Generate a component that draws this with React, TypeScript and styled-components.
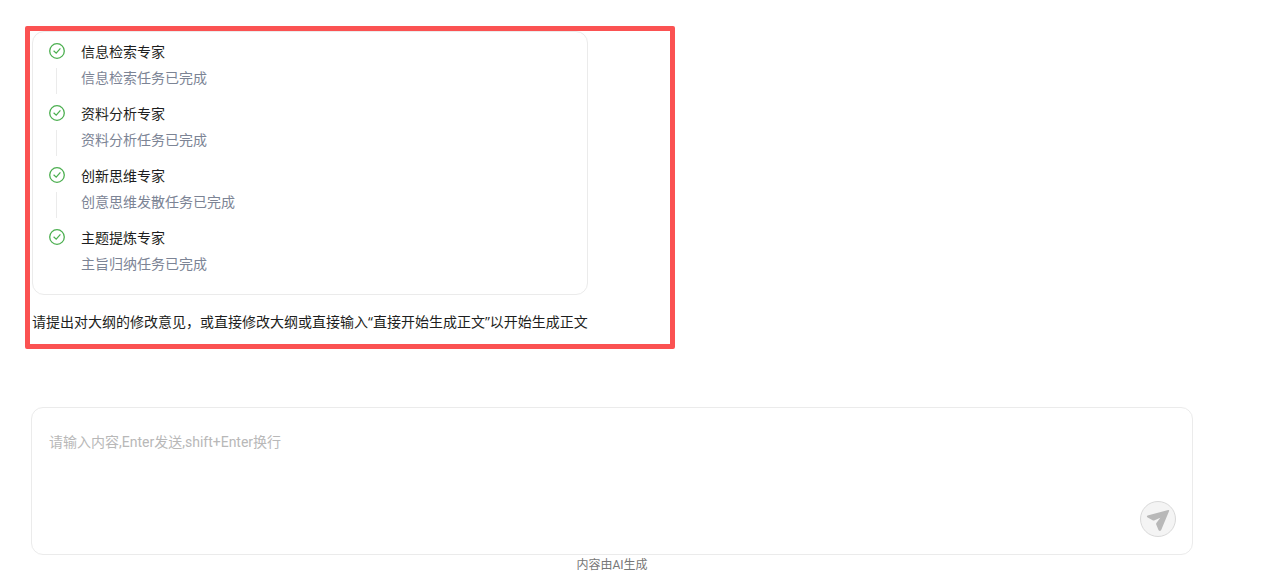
import React from "react";
import styled, { createGlobalStyle } from "styled-components";

const GlobalStyle = createGlobalStyle`
  * { box-sizing: border-box; }
  body {
    margin: 0;
    background: #fff;
    color: #1d1e20;
    font: 400 14px/22px "Open Sans", "Noto Sans CJK SC", sans-serif;
  }
`;

const Page = styled.main`
  padding: 26px 70px 0 25px;
`;

const Highlight = styled.section`
  width: 650px;
  max-width: 100%;
  border: 5px solid #fb5252;
  border-radius: 2px;
  padding: 0 2px 11px;
`;

const Message = styled.div`
  width: fit-content;
`;

const Steps = styled.ol`
  list-style: none;
  margin: 0;
  padding: 9px 16px 19px;
  border: 1px solid #ebebeb;
  border-radius: 12px;
`;

const Step = styled.li`
  display: flex;
  gap: 16px;
  & + & { margin-top: 9px; }
`;

const Rail = styled.div`
  display: flex;
  flex-direction: column;
  align-items: center;
  width: 16px;
  padding-top: 2px;
`;

const Line = styled.span`
  width: 1px;
  height: 26px;
  margin: 9px 1px 0 0;
  background: #ebebeb;
`;

const Body = styled.div`
  display: grid;
  align-content: start;
  gap: 4px;
`;

const Title = styled.h3`
  margin: 0;
  font: inherit;
`;

const Detail = styled.p`
  margin: 0;
  color: #7c8495;
`;

const Prompt = styled.p`
  margin: 16px 0 0;
`;

const Composer = styled.form`
  display: flex;
  align-items: flex-end;
  height: 148px;
  margin: 58px 0 0 6px;
  padding: 16px 16px 17px 17px;
  border: 1px solid #ebebeb;
  border-radius: 12px;
`;

const Input = styled.textarea`
  flex: 1;
  align-self: stretch;
  min-width: 0;
  padding: 7px 0;
  border: 0;
  outline: 0;
  resize: none;
  background: transparent;
  color: inherit;
  font: 400 14px/22px Roboto, "Noto Sans CJK SC", sans-serif;
  &::placeholder { color: #b8b8b8; opacity: 1; }
`;

const SendButton = styled.button`
  display: grid;
  place-items: center;
  width: 36px;
  height: 36px;
  padding: 0;
  border: 1px solid #d9d9d9;
  border-radius: 50%;
  background: #f4f4f4;
  color: #b8b8b8;
`;

const Notice = styled.footer`
  margin-left: 6px;
  text-align: center;
  color: #777;
  font: 400 12px/20px Roboto, "Noto Sans CJK SC", sans-serif;
`;

const steps = [
  { title: "信息检索专家", detail: "信息检索任务已完成" },
  { title: "资料分析专家", detail: "资料分析任务已完成" },
  { title: "创新思维专家", detail: "创意思维发散任务已完成" },
  { title: "主题提炼专家", detail: "主旨归纳任务已完成" },
];

const DoneIcon = () => (
  <svg width="16" height="16" viewBox="0 0 16 16" fill="none" stroke="#4caf50" aria-hidden="true">
    <circle cx="8" cy="8" r="7.3" strokeWidth="1.3" />
    <path d="M4.6 7.7 7.2 10.2 11.4 5.3" strokeWidth="1.2" />
  </svg>
);

const SendIcon = () => (
  <svg width="24" height="24" viewBox="0 0 24 24" fill="currentColor" aria-hidden="true">
    <path d="M22.2 3.1Q23.5 2.9 23.1 4.1L15.2 22.9Q14 24.8 12.6 23.2L10.2 17.6Q9.9 16.7 10.4 15.9L14.3 10.7 8.6 13.2Q7.6 13.6 6.6 13.2L1.3 10.2Q.3 9 1.6 8.4Z" />
  </svg>
);

export default function App() {
  return (
    <>
      <GlobalStyle />
      <Page>
        <Highlight>
          <Message>
            <Steps>
              {steps.map((step, i) => (
                <Step key={step.title}>
                  <Rail>
                    <DoneIcon />
                    {i < steps.length - 1 && <Line />}
                  </Rail>
                  <Body>
                    <Title>{step.title}</Title>
                    <Detail>{step.detail}</Detail>
                  </Body>
                </Step>
              ))}
            </Steps>
            <Prompt>请提出对大纲的修改意见，或直接修改大纲或直接输入“直接开始生成正文”以开始生成正文</Prompt>
          </Message>
        </Highlight>
        <Composer onSubmit={(e) => e.preventDefault()}>
          <Input aria-label="输入内容" placeholder="请输入内容,Enter发送,shift+Enter换行" />
          <SendButton type="submit" aria-label="发送">
            <SendIcon />
          </SendButton>
        </Composer>
        <Notice>内容由AI生成</Notice>
      </Page>
    </>
  );
}
